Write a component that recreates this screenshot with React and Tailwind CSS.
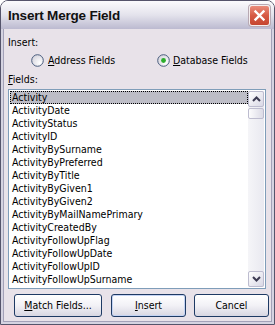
import React from "react";

const fields = [
	"Activity",
	"ActivityDate",
	"ActivityStatus",
	"ActivityID",
	"ActivityBySurname",
	"ActivityByPreferred",
	"ActivityByTitle",
	"ActivityByGiven1",
	"ActivityByGiven2",
	"ActivityByMailNamePrimary",
	"ActivityCreatedBy",
	"ActivityFollowUpFlag",
	"ActivityFollowUpDate",
	"ActivityFollowUpID",
	"ActivityFollowUpSurname",
];

// radio bullet, XP style
const Radio = ({ checked }) => (
	<svg width="13" height="13" viewBox="0 0 13 13" className="shrink-0">
		<defs>
			<radialGradient id={checked ? "rg1" : "rg0"} cx="0.7" cy="0.7" r="0.8">
				<stop offset="0" stopColor="#ffffff" />
				<stop offset="1" stopColor="#d4d3dc" />
			</radialGradient>
		</defs>
		<circle cx="6.5" cy="6.5" r="5.8" fill={`url(#${checked ? "rg1" : "rg0"})`} stroke="#4a5d7e" strokeWidth="1" />
		{checked && <circle cx="6.5" cy="6.5" r="2.4" fill="#2bad2b" />}
	</svg>
);

const ScrollButton = ({ up }) => (
	<div className="h-[16px] w-[16px] rounded-[2px] border border-[#bdbccf] bg-gradient-to-br from-[#ffffff] to-[#d9d8e5] flex items-center justify-center">
		<svg width="9" height="6" viewBox="0 0 9 6">
			<path
				d={up ? "M1 5 L4.5 1.5 L8 5" : "M1 1 L4.5 4.5 L8 1"}
				fill="none"
				stroke="#3c3b52"
				strokeWidth="2"
			/>
		</svg>
	</div>
);

const Button = ({ children, width, isDefault, className = "" }) => (
	<div
		className={`h-[23px] ${width} ${className} rounded-[3px] border border-[#1e3a64] bg-gradient-to-b from-[#ffffff] via-[#f2f1f6] to-[#d8d7e2] flex items-center justify-center ${
			isDefault ? "shadow-[inset_0_0_0_1px_#c4d3f3]" : ""
		}`}>
		{children}
	</div>
);

const App = () => {
	return (
		<div className="w-[275px] h-[325px] bg-white font-['DejaVu_Sans_Condensed','Liberation_Sans',sans-serif] text-[10.5px] leading-[13px] text-black">
			<div className="flex h-full flex-col overflow-hidden rounded-t-[8px] border border-[#55546b]">
				{/* Title bar */}
				<div className="h-[28px] shrink-0 flex items-center justify-between pl-[7px] pr-[4px] bg-gradient-to-b from-[#fbfbfd] via-[#e4e3ec] to-[#bcbad0]">
					<span className="font-['Liberation_Sans',sans-serif] text-[13.5px] font-bold tracking-[-0.2px] text-[#111] mt-[1px]">
						Insert Merge Field
					</span>
					<div className="h-[21px] w-[21px] rounded-[3px] border border-[#f4eeee] bg-gradient-to-b from-[#e98d7c] via-[#d65a44] to-[#c6452f] flex items-center justify-center shadow-[0_0_0_1px_#b8a9b3]">
						<svg width="13" height="13" viewBox="0 0 13 13">
							<path d="M2.5 2.5 L10.5 10.5 M10.5 2.5 L2.5 10.5" stroke="#ffffff" strokeWidth="2.4" strokeLinecap="square" />
						</svg>
					</div>
				</div>

				{/* Body with frame */}
				<div className="flex-1 border-x-2 border-b-2 border-[#d5d3e1]">
					<div className="h-full border-x border-b border-[#a3a1b8] bg-[#e8e2e9] pl-[4px] pt-[7px]">
						<div>Insert:</div>

						<div className="mt-[5px] flex items-center pl-[23px] h-[13px]">
							<div className="w-[126px] flex items-center gap-[4px]">
								<Radio />
								<span>
									<span className="underline">A</span>ddress Fields
								</span>
							</div>
							<div className="flex items-center gap-[3px]">
								<Radio checked />
								<span>
									<span className="underline">D</span>atabase Fields
								</span>
							</div>
						</div>

						<div className="mt-[6px]">
							<span className="underline">F</span>ields:
						</div>

						{/* List box */}
						<div className="mt-[3px] h-[200px] w-[258px] border border-[#7f9db9] bg-white p-[1px] flex overflow-hidden">
							<div className="flex-1">
								{fields.map((f, i) => (
									<div
										key={f}
										className={`h-[13px] pl-[2px] whitespace-nowrap ${
											i === 0 ? "bg-[#bdbdc6] outline outline-1 outline-dotted outline-black -outline-offset-1" : ""
										}`}>
										{f}
									</div>
								))}
							</div>
							<div className="w-[16px] flex flex-col bg-gradient-to-r from-[#f5f5f8] to-[#e9e9f0]">
								<ScrollButton up />
								<div className="mt-[1px] h-[11px] w-[16px] rounded-[2px] border border-[#bdbccf] bg-gradient-to-r from-[#fcfcfd] to-[#dcdbe6]" />
								<div className="flex-1" />
								<ScrollButton />
							</div>
						</div>

						{/* Buttons */}
						<div className="mt-[5px] flex">
							<Button width="w-[88px]" className="ml-[6px]">
								<span>
									<span className="underline">M</span>atch Fields...
								</span>
							</Button>
							<Button width="w-[75px]" className="ml-[9px]" isDefault>
								<span>
									<span className="underline">I</span>nsert
								</span>
							</Button>
							<Button width="w-[75px]" className="ml-[8px]">
								Cancel
							</Button>
						</div>
					</div>
				</div>
			</div>
		</div>
	);
};

export default App;
